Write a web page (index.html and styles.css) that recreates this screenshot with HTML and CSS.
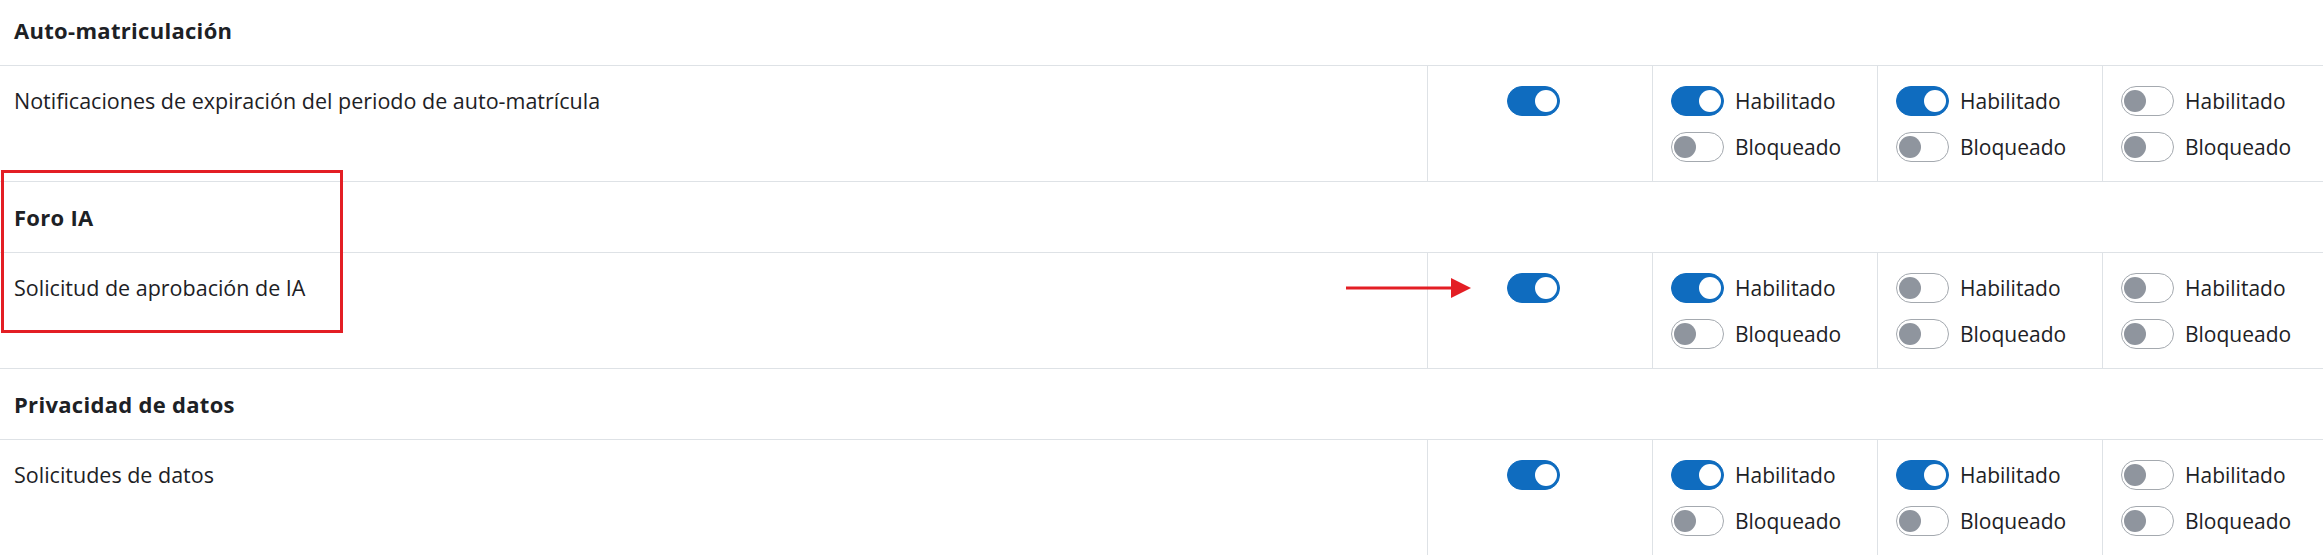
FILE: index.html
```html
<!DOCTYPE html>
<html lang="es">
<head>
<meta charset="utf-8">
<title>Preferencias de notificación</title>
<link rel="stylesheet" href="styles.css">
</head>
<body>
<div class="page">
  <div class="table">
    <div class="section-row">Auto-matriculación</div>
    <div class="data-row">
      <div class="name-cell">Notificaciones de expiración del periodo de auto-matrícula</div>
      <div class="main-cell"><span class="switch on"></span></div>
      <div class="opt-cell">
        <div class="opt"><span class="switch on"></span><span class="opt-label">Habilitado</span></div>
        <div class="opt"><span class="switch"></span><span class="opt-label">Bloqueado</span></div>
      </div>
      <div class="opt-cell">
        <div class="opt"><span class="switch on"></span><span class="opt-label">Habilitado</span></div>
        <div class="opt"><span class="switch"></span><span class="opt-label">Bloqueado</span></div>
      </div>
      <div class="opt-cell">
        <div class="opt"><span class="switch"></span><span class="opt-label">Habilitado</span></div>
        <div class="opt"><span class="switch"></span><span class="opt-label">Bloqueado</span></div>
      </div>
    </div>

    <div class="section-row">Foro IA</div>
    <div class="data-row">
      <div class="name-cell">Solicitud de aprobación de IA</div>
      <div class="main-cell"><span class="switch on"></span></div>
      <div class="opt-cell">
        <div class="opt"><span class="switch on"></span><span class="opt-label">Habilitado</span></div>
        <div class="opt"><span class="switch"></span><span class="opt-label">Bloqueado</span></div>
      </div>
      <div class="opt-cell">
        <div class="opt"><span class="switch"></span><span class="opt-label">Habilitado</span></div>
        <div class="opt"><span class="switch"></span><span class="opt-label">Bloqueado</span></div>
      </div>
      <div class="opt-cell">
        <div class="opt"><span class="switch"></span><span class="opt-label">Habilitado</span></div>
        <div class="opt"><span class="switch"></span><span class="opt-label">Bloqueado</span></div>
      </div>
    </div>

    <div class="section-row">Privacidad de datos</div>
    <div class="data-row">
      <div class="name-cell">Solicitudes de datos</div>
      <div class="main-cell"><span class="switch on"></span></div>
      <div class="opt-cell">
        <div class="opt"><span class="switch on"></span><span class="opt-label">Habilitado</span></div>
        <div class="opt"><span class="switch"></span><span class="opt-label">Bloqueado</span></div>
      </div>
      <div class="opt-cell">
        <div class="opt"><span class="switch on"></span><span class="opt-label">Habilitado</span></div>
        <div class="opt"><span class="switch"></span><span class="opt-label">Bloqueado</span></div>
      </div>
      <div class="opt-cell">
        <div class="opt"><span class="switch"></span><span class="opt-label">Habilitado</span></div>
        <div class="opt"><span class="switch"></span><span class="opt-label">Bloqueado</span></div>
      </div>
    </div>
  </div>

  <div class="annot-box"></div>
  <svg class="annot-arrow" width="130" height="24" viewBox="0 0 130 24" aria-hidden="true">
    <rect x="0" y="10.5" width="108" height="3" fill="#e31e24"/>
    <polygon points="105,2 125,12 105,22" fill="#e31e24"/>
  </svg>
</div>
</body>
</html>
```

FILE: styles.css
```css
html, body {
  margin: 0;
  padding: 0;
  background: #ffffff;
}

body {
  overflow: hidden;
  font-family: "Open Sans", "Noto Sans", "Liberation Sans", sans-serif;
  font-size: 21px;
  line-height: 30px;
  color: #1d2125;
}

.page {
  position: relative;
  width: 2323px;
  height: 555px;
  overflow: hidden;
}

.table {
  margin-top: -5px;
}

.section-row {
  padding: 20px 14px;
  font-size: 22px;
  font-weight: 700;
  letter-spacing: 0.3px;
  border-top: 1px solid #dee2e6;
}

.section-row:first-child {
  border-top: none;
}

.data-row {
  display: grid;
  grid-template-columns: minmax(0, 1fr) 225px 225px 225px 221px;
  border-top: 1px solid #dee2e6;
}

.name-cell {
  padding: 20px 14px 19px;
  font-size: 21.5px;
}

.main-cell {
  padding: 20px 0 19px 79px;
  border-left: 1px solid #dee2e6;
}

.opt-cell {
  display: flex;
  flex-direction: column;
  gap: 16px;
  padding: 20px 0 19px 18px;
  border-left: 1px solid #dee2e6;
}

.opt {
  display: flex;
  align-items: center;
  height: 30px;
}

.opt-label {
  margin-left: 11px;
}

.switch {
  position: relative;
  display: block;
  box-sizing: border-box;
  width: 53px;
  height: 30px;
  border: 1px solid #a4a9af;
  border-radius: 15px;
  background: #ffffff;
}

.switch::after {
  content: "";
  position: absolute;
  top: 3px;
  left: 2px;
  width: 22px;
  height: 22px;
  border-radius: 50%;
  background: #8f959e;
}

.switch.on {
  background: #0f6cbf;
  border-color: #0f6cbf;
}

.switch.on::after {
  left: auto;
  right: 2px;
  background: #ffffff;
}

.annot-box {
  position: absolute;
  left: 1px;
  top: 170px;
  width: 342px;
  height: 163px;
  box-sizing: border-box;
  border: 3px solid #e31e24;
}

.annot-arrow {
  position: absolute;
  left: 1346px;
  top: 276px;
}
```
